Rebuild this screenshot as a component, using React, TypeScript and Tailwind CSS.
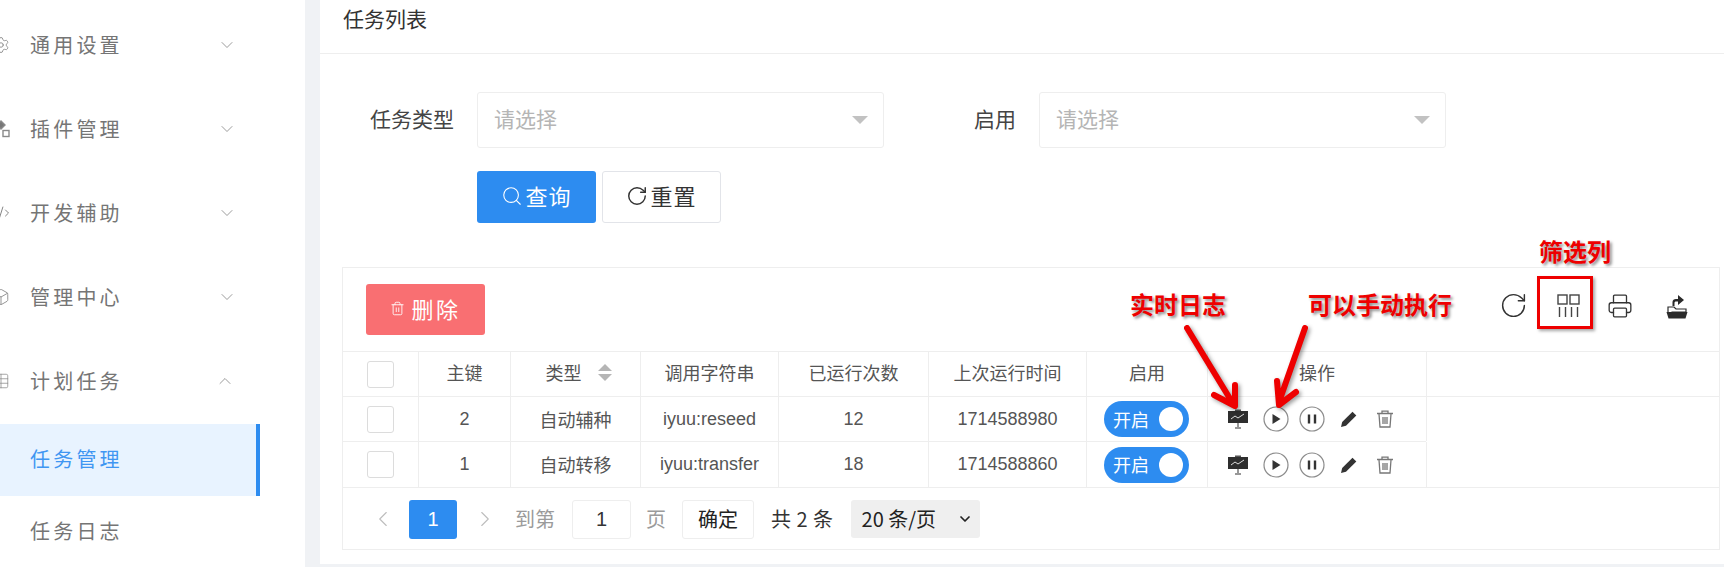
import React from "react";
import { ChevronDown, ChevronUp, ChevronLeft, ChevronRight, Settings, CodeXml, Box, Table, RotateCw, Printer, Search, Trash2 } from "lucide-react";

const F = '"Noto Sans CJK SC","Liberation Sans",sans-serif';
const LAT = '"Liberation Sans",sans-serif';
const GRID = "grid grid-cols-[76px_92px_130px_138px_150px_158px_121px_219px_1fr]";
const CELL = "flex items-center justify-center border-r border-[#eeeeee] text-[18px] text-[#555555]";

function Plugin() {
  return (
    <svg width="18" height="18" viewBox="0 0 18 18" className="shrink-0" fill="none" stroke="#8a8a8a" strokeWidth="1.4">
      <path d="M9 1l4 4-4 4-4-4z" fill="#777" />
      <rect x="1" y="10.5" width="6" height="6" />
      <rect x="11" y="10.5" width="6" height="6" />
    </svg>
  );
}

function SideItem({ label, icon, open }: { label: string; icon: React.ReactNode; open?: boolean }) {
  return (
    <div className="flex h-[84px] items-center text-[#757575]">
      <div className="-ml-[38px] mr-[20px] flex w-[18px] justify-center">{icon}</div>
      <span className="text-[20px] tracking-[3.2px]">{label}</span>
      {open ? (
        <ChevronUp className="ml-[92px]" size={20} strokeWidth={1} color="#888" />
      ) : (
        <ChevronDown className="ml-[94px]" size={20} strokeWidth={1} color="#888" />
      )}
    </div>
  );
}

function Select({ w }: { w: string }) {
  return (
    <div className={`flex h-[56px] items-center justify-between rounded-[3px] border border-[#eeeeee] bg-white pl-[16px] pr-[15px] ${w}`}>
      <span className="pb-[2px] text-[21px] text-[#b5b5b5]">请选择</span>
      <span className="h-0 w-0 border-x-[8px] border-t-[8px] border-x-transparent border-t-[#c2c2c2]" />
    </div>
  );
}

function Board() {
  return (
    <svg width="22" height="20" viewBox="0 0 22 20">
      <rect x="8" y="0.5" width="6" height="2" fill="#555" />
      <rect x="1" y="2" width="20" height="12" fill="#2e2e2e" />
      <path d="M4 10l4-3 3 2 6-4" fill="none" stroke="#ddd" strokeWidth="1" />
      <path d="M11 14v4M8 19h6" stroke="#777" strokeWidth="1.5" />
    </svg>
  );
}

function Ops() {
  return (
    <div className="flex h-full items-center pl-[19px]">
      <div className="flex w-[36px] justify-start"><Board /></div>
      <svg width="26" height="26" viewBox="0 0 26 26" className="mr-[10px]">
        <circle cx="13" cy="13" r="12" fill="none" stroke="#8b8b8b" strokeWidth="1.2" />
        <path d="M9.5 8l8 5-8 5z" fill="#333" />
      </svg>
      <svg width="26" height="26" viewBox="0 0 26 26" className="mr-[15px]">
        <circle cx="13" cy="13" r="12" fill="none" stroke="#8b8b8b" strokeWidth="1.2" />
        <path d="M10 8.5v9M16 8.5v9" stroke="#333" strokeWidth="2.4" />
      </svg>
      <svg width="18" height="18" viewBox="0 0 18 18" className="mr-[18px]">
        <path d="M1 17l1.2-5L12.5 1.7l3.8 3.8L6 15.8z" fill="#333" />
      </svg>
      <svg width="18" height="18" viewBox="0 0 18 18" fill="none" stroke="#777" strokeWidth="1.3">
        <path d="M1 3.5h16M6 3V1.2h6V3M3 4l1 13h10l1-13M7 7v7M9 7v7M11 7v7" />
      </svg>
    </div>
  );
}

function Check() {
  return <div className="h-[27px] w-[27px] rounded-[3px] border border-[#dcdcdc] bg-white" />;
}

function Row({ id, type, call, n, time, last }: { id: string; type: string; call: string; n: string; time: string; last?: boolean }) {
  return (
    <div className={`${GRID} ${last ? "h-[46px] border-b" : "h-[44px]"} border-[#eeeeee]`}>
      <div className={CELL}><div className="-ml-[1px]"><Check /></div></div>
      <div className={CELL} style={{ fontFamily: LAT }}>{id}</div>
      <div className={CELL}>{type}</div>
      <div className={CELL} style={{ fontFamily: LAT }}>{call}</div>
      <div className={CELL} style={{ fontFamily: LAT }}>{n}</div>
      <div className={CELL} style={{ fontFamily: LAT }}>{time}</div>
      <div className={CELL}>
        <div className="-ml-[1px] flex h-[36px] w-[85px] items-center justify-between rounded-full bg-[#2d8cf0] pl-[9px] pr-[6px] text-[18px] text-white">
          <span>开启</span>
          <span className="h-[24px] w-[24px] rounded-full bg-white" />
        </div>
      </div>
      <div className="border-r border-[#eeeeee]"><Ops /></div>
      <div className="bg-white" />
    </div>
  );
}

function Annot({ className, children }: { className: string; children: string }) {
  return (
    <span className={`absolute text-[24px] font-bold leading-none text-[#ee0000] [text-shadow:2px_2px_3px_rgba(0,0,0,0.45)] ${className}`}>
      {children}
    </span>
  );
}

export default function App() {
  return (
    <div className="relative flex h-[567px] w-[1724px] overflow-hidden bg-[#f0f2f5]" style={{ fontFamily: F }}>
      <aside className="w-[305px] shrink-0 bg-white pt-[3px]">
        <div className="pl-[30px]">
          <SideItem label="通用设置" icon={<Settings size={18} strokeWidth={1.2} color="#8a8a8a" />} />
          <SideItem label="插件管理" icon={<Plugin />} />
          <SideItem label="开发辅助" icon={<CodeXml size={18} strokeWidth={1.2} color="#777" />} />
          <SideItem label="管理中心" icon={<Box size={18} strokeWidth={1.2} color="#8a8a8a" />} />
          <SideItem label="计划任务" icon={<Table size={18} strokeWidth={1} color="#8a8a8a" />} open />
        </div>
        <div className="mt-[1px] h-[72px] w-[260px] border-r-4 border-[#2d8cf0] bg-[#e8f3ff] pl-[30px] text-[20px] leading-[70px] tracking-[3.2px] text-[#3f96f2]">任务管理</div>
        <div className="h-[72px] pl-[30px] text-[20px] leading-[70px] tracking-[3.2px] text-[#757575]">任务日志</div>
      </aside>

      <main className="ml-[15px] h-[564px] flex-1 bg-white">
        <div className="h-[54px] border-b border-[#eeeeee] pl-[23px] text-[21px] leading-[37px] text-[#333333]">任务列表</div>
        <div className="mt-[38px] flex items-center">
          <label className="w-[157px] pb-[2px] pr-[23px] text-right text-[21px] text-[#444444]">任务类型</label>
          <Select w="w-[407px]" />
          <label className="w-[155px] pb-[2px] pr-[23px] text-right text-[21px] text-[#444444]">启用</label>
          <Select w="w-[407px]" />
        </div>
        <div className="ml-[157px] mt-[23px] flex gap-[6px]">
          <button className="flex h-[52px] w-[119px] items-center justify-center gap-[2px] rounded-[3px] bg-[#2d8cf0] pb-[3px] text-[22px] tracking-[1px] text-white">
            <Search size={22} strokeWidth={1.2} />查询
          </button>
          <button className="flex h-[52px] w-[119px] items-center justify-center gap-[2px] rounded-[3px] border border-[#e2e4e9] bg-white pb-[3px] text-[22px] tracking-[1px] text-[#333333]">
            <RotateCw size={22} strokeWidth={1.6} />重置
          </button>
        </div>

        <section className="ml-[22px] mr-[4px] mt-[44px] h-[283px] border border-[#eeeeee]">
          <div className="flex h-[83px] items-start justify-between pl-[23px] pt-[16px]">
            <button className="flex h-[51px] w-[119px] items-center justify-center gap-[6px] rounded-[3px] bg-[#f96f72] pb-[2px] text-[22px] tracking-[2.5px] text-white">
              <Trash2 size={15} strokeWidth={1.4} />删除
            </button>
            <div className="mr-[30px] mt-[7px] flex items-center">
              <RotateCw size={29} strokeWidth={1.2} color="#333" />
              <svg className="ml-[29px]" width="23" height="24" viewBox="0 0 23 24" fill="none" stroke="#444" strokeWidth="1.4">
                <rect x="1" y="1" width="9" height="9" />
                <rect x="13" y="1" width="9" height="9" />
                <path d="M2.5 13v10M8.5 13v10M14.5 13v10M20.5 13v10" />
              </svg>
              <Printer className="ml-[27px]" size={26} strokeWidth={1.2} color="#333" />
              <svg className="ml-[32px]" width="24" height="26" viewBox="0 0 24 26">
                <path d="M3 14h6l2 2h10v3H7l-1 1H3z" fill="none" stroke="#2b2b2b" strokeWidth="1.2" />
                <path d="M1.5 19h21l-2 6.5H3.5z" fill="#2b2b2b" />
                <path d="M7.5 13V9c0-2 1.5-3 3.5-3H13V2l6 5-6 5V8.5h-2c-1 0-1.5.5-1.5 1.5v3z" fill="#2b2b2b" />
              </svg>
            </div>
          </div>
          <div className={`${GRID} h-[46px] border-y border-[#eeeeee]`}>
            <div className={CELL}><div className="-ml-[1px]"><Check /></div></div>
            <div className={`${CELL} pb-[3px]`}>主键</div>
            <div className={`${CELL} gap-[16px] pb-[3px] pl-[6px]`}>
              <span>类型</span>
              <span className="flex flex-col gap-[3px]">
                <span className="h-0 w-0 border-x-[7px] border-b-[7px] border-x-transparent border-b-[#b5b5b5]" />
                <span className="h-0 w-0 border-x-[7px] border-t-[7px] border-x-transparent border-t-[#b5b5b5]" />
              </span>
            </div>
            <div className={`${CELL} pb-[3px]`}>调用字符串</div>
            <div className={`${CELL} pb-[3px]`}>已运行次数</div>
            <div className={`${CELL} pb-[3px]`}>上次运行时间</div>
            <div className={`${CELL} pb-[3px]`}>启用</div>
            <div className={`${CELL} pb-[3px]`}>操作</div>
            <div />
          </div>
          <Row id="2" type="自动辅种" call="iyuu:reseed" n="12" time="1714588980" />
          <div className="mr-[293px] h-px bg-[#eeeeee]" />
          <Row id="1" type="自动转移" call="iyuu:transfer" n="18" time="1714588860" last />
          <div className="flex h-[62px] items-center pl-[27px]">
            <ChevronLeft size={26} strokeWidth={1} color="#bdbdbd" />
            <div className="ml-[13px] flex h-[39px] w-[48px] items-center justify-center rounded-[3px] bg-[#2d8cf0] text-[20px] text-white" style={{ fontFamily: LAT }}>1</div>
            <ChevronRight className="ml-[15px]" size={26} strokeWidth={1} color="#bdbdbd" />
            <span className="ml-[17px] text-[20px] text-[#9b9b9b]">到第</span>
            <div className="ml-[17px] flex h-[39px] w-[59px] items-center justify-center rounded-[3px] border border-[#eeeeee] text-[20px] text-[#333333]" style={{ fontFamily: LAT }}>1</div>
            <span className="ml-[15px] text-[20px] text-[#9b9b9b]">页</span>
            <div className="ml-[16px] flex h-[39px] w-[72px] items-center justify-center rounded-[3px] border border-[#eeeeee] text-[20px] text-[#222222]">确定</div>
            <span className="ml-[17px] text-[20px] tracking-[0.5px] text-[#333333]">共 2 条</span>
            <div className="ml-[17px] flex h-[38px] w-[129px] items-center justify-between rounded-[3px] bg-[#efefef] pl-[11px] pr-[7px] text-[20px] text-[#222222]">
              <span>20 条/页</span>
              <ChevronDown size={16} strokeWidth={2.6} />
            </div>
          </div>
        </section>
      </main>

      <div className="pointer-events-none absolute inset-0">
        <Annot className="left-[1539px] top-[239px]">筛选列</Annot>
        <Annot className="left-[1130px] top-[292px]">实时日志</Annot>
        <Annot className="left-[1308px] top-[292px]">可以手动执行</Annot>
        <div className="absolute left-[1537px] top-[276px] h-[53px] w-[56px] border-[3px] border-[#ee0000] shadow-[2px_2px_3px_rgba(0,0,0,0.35)]" />
        <svg className="absolute left-0 top-0" width="1724" height="567" fill="none" stroke="#ee0000" strokeWidth="6" strokeLinecap="round" strokeLinejoin="round" style={{ filter: "drop-shadow(2px 2px 2px rgba(0,0,0,0.4))" }}>
          <path d="M1187 328L1232 402M1214 395L1235 406L1235 385" />
          <path d="M1305 328L1279 402M1277 381L1279 405L1296 392" />
        </svg>
      </div>
    </div>
  );
}
